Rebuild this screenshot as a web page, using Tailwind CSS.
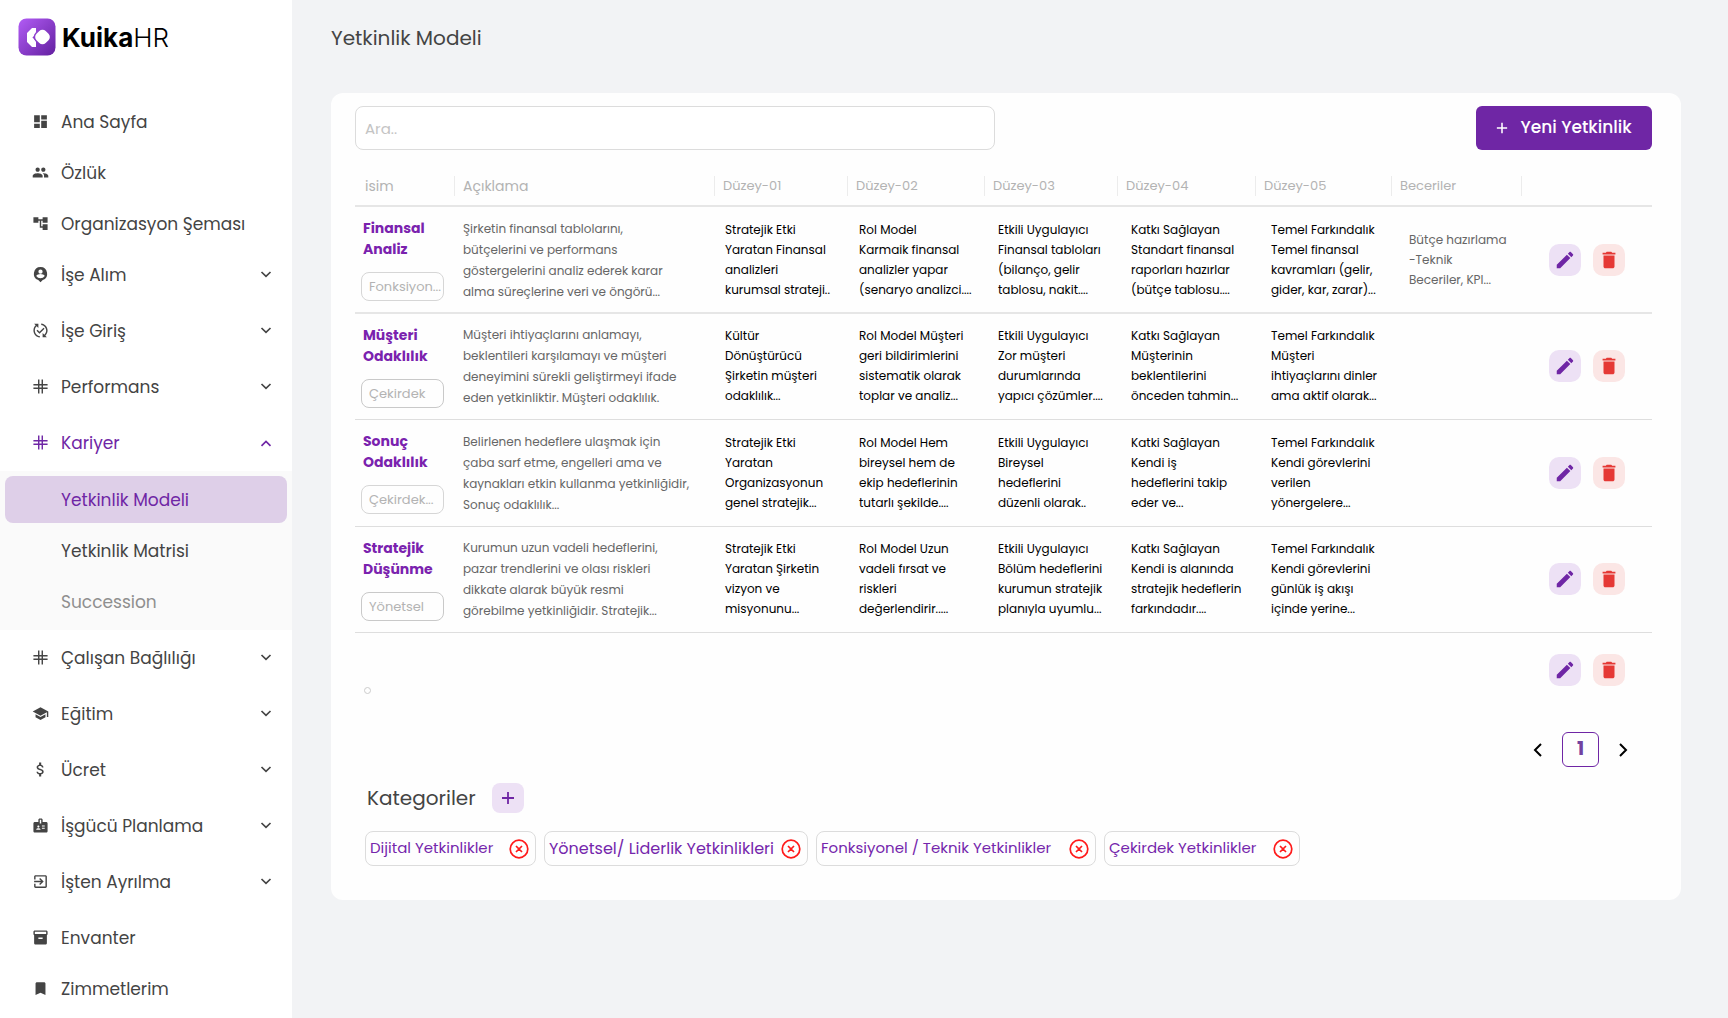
<!DOCTYPE html>
<html lang="tr">
<head>
    <meta charset="UTF-8">
    <meta name="viewport" content="width=device-width, initial-scale=1.0">
    <title>KuikaHR - Yetkinlik Modeli</title>
    <script src="https://cdn.jsdelivr.net/npm/@tailwindcss/browser@4"></script>
</head>
<body class="bg-[#f2f3f5] font-['Poppins','Inter',sans-serif] text-[#444444]">
    <!-- Icon set -->
    <svg class="hidden">
        <symbol id="i-dashboard" viewBox="0 0 24 24"><path d="M3 13h8V3H3v10zm0 8h8v-6H3v6zm10 0h8V11h-8v10zm0-18v6h8V3h-8z"/></symbol>
        <symbol id="i-group" viewBox="0 0 24 24"><path d="M16 11c1.66 0 2.99-1.34 2.99-3S17.66 5 16 5c-1.66 0-3 1.34-3 3s1.34 3 3 3zm-8 0c1.66 0 2.99-1.34 2.99-3S9.66 5 8 5C6.34 5 5 6.34 5 8s1.34 3 3 3zm0 2c-2.33 0-7 1.17-7 3.5V19h14v-2.5c0-2.33-4.67-3.5-7-3.5zm8 0c-.29 0-.62.02-.97.05 1.16.84 1.97 1.97 1.97 3.45V19h6v-2.5c0-2.33-4.67-3.5-7-3.5z"/></symbol>
        <symbol id="i-tree" viewBox="0 0 24 24"><path d="M22 11V3h-7v3H9V3H2v8h7V8h2v10h4v3h7v-8h-7v3h-2V8h2v3z"/></symbol>
        <symbol id="i-pin" viewBox="0 0 24 24"><path fill-rule="evenodd" d="M12 1.500a9.500 9.500 0 0 0-3.200 18.400L12 23l3.200-3.100A9.500 9.500 0 0 0 12 1.500zM12 5a3 3 0 1 1 0 6 3 3 0 0 1 0-6zM6 14.200c0-1.900 4-2.900 6-2.900s6 1 6 2.900a7.200 7.200 0 0 1-12 0z"/></symbol>
        <symbol id="i-changes" viewBox="0 0 24 24"><path d="M17.66 9.53l-7.07 7.07-4.24-4.24 1.41-1.41 2.83 2.83 5.66-5.66 1.41 1.41zM4 12c0-2.33 1.02-4.42 2.62-5.88L9 8.5v-6H3l2.2 2.2C3.24 6.52 2 9.11 2 12c0 5.19 3.95 9.45 9 9.95v-2.02c-3.94-.49-7-3.86-7-7.93zm18 0c0-5.19-3.95-9.45-9-9.95v2.02c3.94.49 7 3.86 7 7.93 0 2.33-1.02 4.42-2.62 5.88L15 15.5v6h6l-2.2-2.2c1.96-1.82 3.2-4.41 3.2-7.3z"/></symbol>
        <symbol id="i-hash" viewBox="0 0 24 24"><path d="M9.500 2v20M14.500 2v20M2 9.500h20M2 14.500h20" fill="none" stroke="currentColor" stroke-width="2"/></symbol>
        <symbol id="i-school" viewBox="0 0 24 24"><path d="M5 13.18v4L12 21l7-3.82v-4L12 17l-7-3.82zM12 3L1 9l11 6 9-4.91V17h2V9L12 3z"/></symbol>
        <symbol id="i-money" viewBox="0 0 24 24"><path d="M11.800 10.900c-2.270-.590-3-1.200-3-2.150 0-1.090 1.010-1.850 2.700-1.850 1.780 0 2.440.850 2.500 2.100h2.210c-.070-1.720-1.120-3.300-3.210-3.810V2h-3v3.160c-1.940.420-3.500 1.680-3.500 3.610 0 2.310 1.910 3.460 4.700 4.130 2.500.6 3 1.480 3 2.410 0 .690-.490 1.790-2.700 1.790-2.060 0-2.870-.920-2.980-2.100h-2.200c.120 2.190 1.760 3.420 3.680 3.830V22h3v-3.150c1.950-.370 3.500-1.500 3.500-3.550 0-2.840-2.430-3.810-4.700-4.400z"/></symbol>
        <symbol id="i-badge" viewBox="0 0 24 24"><path d="M20 7h-5V4c0-1.100-.9-2-2-2h-2c-1.100 0-2 .9-2 2v3H4c-1.100 0-2 .9-2 2v11c0 1.100.9 2 2 2h16c1.100 0 2-.9 2-2V9c0-1.100-.9-2-2-2zM9 12c.83 0 1.500.67 1.500 1.500S9.830 15 9 15s-1.500-.67-1.500-1.500S8.170 12 9 12zm3 6H6v-.43c0-.6.36-1.150.92-1.390.65-.28 1.350-.43 2.080-.43s1.430.15 2.080.43c.56.24.92.78.92 1.390V18zm1-9h-2V4h2v5zm5 7.500h-4V15h4v1.500zm0-3h-4V12h4v1.500z"/></symbol>
        <symbol id="i-exit" viewBox="0 0 24 24"><path d="M10.090 15.590L11.500 17l5-5-5-5-1.410 1.410L12.670 11H3v2h9.670l-2.580 2.590zM19 3H5c-1.110 0-2 .9-2 2v4h2V5h14v14H5v-4H3v4c0 1.100.89 2 2 2h14c1.100 0 2-.9 2-2V5c0-1.100-.9-2-2-2z"/></symbol>
        <symbol id="i-box" viewBox="0 0 24 24"><path d="M20 2H4c-1 0-2 .9-2 2v3.010c0 .72.43 1.340 1 1.690V20c0 1.100 1.100 2 2 2h14c.9 0 2-.9 2-2V8.700c.57-.35 1-.97 1-1.690V4c0-1.100-1-2-2-2zm-5 12H9v-2h6v2zm5-7H4V4l16-.02V7z"/></symbol>
        <symbol id="i-bookmark" viewBox="0 0 24 24"><path d="M17 3H7c-1.100 0-1.990.9-1.990 2L5 21l7-3 7 3V5c0-1.100-.9-2-2-2z"/></symbol>
        <symbol id="i-down" viewBox="0 0 12 12"><path d="M1.500 3L6 7.300 10.500 3" fill="none" stroke="currentColor" stroke-width="1.700"/></symbol>
        <symbol id="i-up" viewBox="0 0 12 12"><path d="M1.500 8.800L6 4.500l4.500 4.300" fill="none" stroke="currentColor" stroke-width="1.700"/></symbol>
        <symbol id="i-edit" viewBox="0 0 24 24"><path d="M3 17.250V21h3.750L17.810 9.940l-3.750-3.750L3 17.250zM20.710 7.040c.39-.39.39-1.020 0-1.410l-2.340-2.340c-.39-.39-1.020-.39-1.410 0l-1.830 1.830 3.750 3.750 1.830-1.830z"/></symbol>
        <symbol id="i-delete" viewBox="0 0 24 24"><path d="M6 19c0 1.100.9 2 2 2h8c1.100 0 2-.9 2-2V7H6v12zM19 4h-3.500l-1-1h-5l-1 1H5v2h14V4z"/></symbol>
        <symbol id="i-plus" viewBox="0 0 14 14"><path d="M7 1v12M1 7h12" fill="none" stroke="currentColor" stroke-width="1.800"/></symbol>
        <symbol id="i-remove" viewBox="0 0 20 20"><path d="M10 1.200a8.800 8.800 0 1 0 0 17.600 8.800 8.800 0 0 0 0-17.600zM7 7l6 6M13 7l-6 6" fill="none" stroke="currentColor" stroke-width="1.700"/></symbol>
    </svg>

    <div class="flex min-h-screen">
        <!-- Sidebar -->
        <aside class="w-[292px] shrink-0 bg-white">
            <a href="#" class="flex h-[98px] items-start gap-[6px] pt-[18px] pl-[18px] text-black">
                <svg class="size-[38px]" viewBox="0 0 38 38">
                    <defs>
                        <linearGradient id="logo" x1="0" y1="0" x2="1" y2="1"><stop offset="0" stop-color="#b25cf5"/><stop offset="1" stop-color="#6320a0"/></linearGradient>
                        <mask id="gap"><rect width="38" height="38" fill="#fff"/><rect x="18" y="12.500" width="13" height="13" rx="4.500" transform="rotate(45 24.500 19)" fill="#000" stroke="#000" stroke-width="3"/></mask>
                    </defs>
                    <rect x="0.500" y="0.500" width="37" height="37" rx="8" fill="url(#logo)"/>
                    <path d="M17.500 11.500L9.500 19.500l8 8" fill="none" stroke="#fff" stroke-width="7" stroke-linecap="round" stroke-linejoin="round" mask="url(#gap)"/>
                    <rect x="18" y="12.500" width="13" height="13" rx="4.500" transform="rotate(45 24.500 19)" fill="#fff"/>
                </svg>
                <span class="font-['Inter',sans-serif] text-[26px] leading-[40px] font-bold">Kuika<span class="font-light">HR</span></span>
            </a>
            <nav>
                <ul class="flex flex-col gap-1 pb-1 text-[17px] leading-7">
                    <li><a href="#" class="flex h-[47px] items-center gap-3 pl-8"><svg class="size-[17px] fill-current"><use href="#i-dashboard"/></svg>Ana Sayfa</a></li>
                    <li><a href="#" class="flex h-[47px] items-center gap-3 pl-8"><svg class="size-[17px] fill-current"><use href="#i-group"/></svg>Özlük</a></li>
                    <li><a href="#" class="flex h-[47px] items-center gap-3 pl-8"><svg class="size-[17px] fill-current"><use href="#i-tree"/></svg>Organizasyon Şeması</a></li>
                    <li class="pb-[5px]"><button class="flex h-[47px] w-full items-center gap-3 pr-5 pl-8"><svg class="size-[17px] fill-current"><use href="#i-pin"/></svg>İşe Alım<svg class="ml-auto size-3"><use href="#i-down"/></svg></button></li>
                    <li class="pb-[5px]"><button class="flex h-[47px] w-full items-center gap-3 pr-5 pl-8"><svg class="size-[17px] fill-current"><use href="#i-changes"/></svg>İşe Giriş<svg class="ml-auto size-3"><use href="#i-down"/></svg></button></li>
                    <li class="pb-[5px]"><button class="flex h-[47px] w-full items-center gap-3 pr-5 pl-8"><svg class="size-[17px] fill-current"><use href="#i-hash"/></svg>Performans<svg class="ml-auto size-3"><use href="#i-down"/></svg></button></li>
                    <li>
                        <button class="flex h-[47px] w-full items-center gap-3 pr-5 pl-8 text-[#6f26a5]"><svg class="size-[17px] fill-current"><use href="#i-hash"/></svg>Kariyer<svg class="ml-auto size-3"><use href="#i-up"/></svg></button>
                        <ul class="mt-[5px] flex flex-col gap-1 bg-[#fafafa] p-[5px]">
                            <li><a href="#" class="flex h-[47px] items-center rounded-lg bg-[#decfe8] pl-14 text-[#6f26a5]">Yetkinlik Modeli</a></li>
                            <li><a href="#" class="flex h-[47px] items-center pl-14">Yetkinlik Matrisi</a></li>
                            <li><a href="#" class="flex h-[47px] items-center pl-14 text-[#8f8f8f]">Succession</a></li>
                        </ul>
                    </li>
                    <li class="pb-[5px]"><button class="flex h-[47px] w-full items-center gap-3 pr-5 pl-8"><svg class="size-[17px] fill-current"><use href="#i-hash"/></svg>Çalışan Bağlılığı<svg class="ml-auto size-3"><use href="#i-down"/></svg></button></li>
                    <li class="pb-[5px]"><button class="flex h-[47px] w-full items-center gap-3 pr-5 pl-8"><svg class="size-[17px] fill-current"><use href="#i-school"/></svg>Eğitim<svg class="ml-auto size-3"><use href="#i-down"/></svg></button></li>
                    <li class="pb-[5px]"><button class="flex h-[47px] w-full items-center gap-3 pr-5 pl-8"><svg class="size-[17px] fill-current"><use href="#i-money"/></svg>Ücret<svg class="ml-auto size-3"><use href="#i-down"/></svg></button></li>
                    <li class="pb-[5px]"><button class="flex h-[47px] w-full items-center gap-3 pr-5 pl-8"><svg class="size-[17px] fill-current"><use href="#i-badge"/></svg>İşgücü Planlama<svg class="ml-auto size-3"><use href="#i-down"/></svg></button></li>
                    <li class="pb-[5px]"><button class="flex h-[47px] w-full items-center gap-3 pr-5 pl-8"><svg class="size-[17px] fill-current"><use href="#i-exit"/></svg>İşten Ayrılma<svg class="ml-auto size-3"><use href="#i-down"/></svg></button></li>
                    <li><a href="#" class="flex h-[47px] items-center gap-3 pl-8"><svg class="size-[17px] fill-current"><use href="#i-box"/></svg>Envanter</a></li>
                    <li><a href="#" class="flex h-[47px] items-center gap-3 pl-8"><svg class="size-[17px] fill-current"><use href="#i-bookmark"/></svg>Zimmetlerim</a></li>
                </ul>
            </nav>
        </aside>

        <!-- Content -->
        <main class="min-w-0 flex-1 pr-[47px] pb-10 pl-[39px]">
            <h1 class="pt-6 pb-[41px] text-[20px] leading-7">Yetkinlik Modeli</h1>

            <section class="rounded-xl bg-[#fefefe] pt-[13px] pr-[29px] pb-[34px] pl-6">
                <div class="flex items-center justify-between gap-6">
                    <input type="text" aria-label="Ara" placeholder="Ara.." class="h-11 w-[640px] min-w-0 rounded-lg border border-[#dcdcdc] bg-white px-[9px] text-[15px] placeholder:text-[#c4c4c4]">
                    <button class="flex h-11 w-[176px] shrink-0 items-center justify-center gap-3 rounded-md bg-[#6f26a5] text-[17px] font-medium text-white"><svg class="size-3"><use href="#i-plus"/></svg>Yeni Yetkinlik</button>
                </div>

                <div class="overflow-x-auto">
                    <table class="w-full min-w-[1200px] table-fixed border-collapse text-left">
                        <colgroup>
                            <col class="w-[100px]">
                            <col>
                            <col class="w-[133px]">
                            <col class="w-[137px]">
                            <col class="w-[133px]">
                            <col class="w-[138px]">
                            <col class="w-[136px]">
                            <col class="w-[130px]">
                            <col class="w-[130px]">
                        </colgroup>
                        <thead class="text-[14px] leading-5 text-[#b3b3b3]">
                            <tr class="border-b-2 border-[#e6e6e6]">
                                <th class="px-0 pt-[26px] pb-[9px] font-normal"><div class="border-r border-[#ececec] pl-[10px]">isim</div></th>
                                <th class="px-0 pt-[26px] pb-[9px] font-normal"><div class="border-r border-[#ececec] pl-2">Açıklama</div></th>
                                <th class="px-0 pt-[26px] pb-[9px] font-normal"><div class="border-r border-[#ececec] pl-2 text-[13px]">Düzey-01</div></th>
                                <th class="px-0 pt-[26px] pb-[9px] font-normal"><div class="border-r border-[#ececec] pl-2 text-[13px]">Düzey-02</div></th>
                                <th class="px-0 pt-[26px] pb-[9px] font-normal"><div class="border-r border-[#ececec] pl-2 text-[13px]">Düzey-03</div></th>
                                <th class="px-0 pt-[26px] pb-[9px] font-normal"><div class="border-r border-[#ececec] pl-2 text-[13px]">Düzey-04</div></th>
                                <th class="px-0 pt-[26px] pb-[9px] font-normal"><div class="border-r border-[#ececec] pl-2 text-[13px]">Düzey-05</div></th>
                                <th class="px-0 pt-[26px] pb-[9px] font-normal"><div class="border-r border-[#ececec] pl-2 text-[13px]">Beceriler</div></th>
                                <th></th>
                            </tr>
                        </thead>
                        <tbody class="text-[12px] leading-5 text-black">
                            <tr class="h-[107px] border-b-2 border-[#e6e6e6]">
                                <td class="pl-[6px]">
                                    <div class="mb-3 pl-[2px] text-[14px] leading-[21px] font-bold text-[#7a22ae]">Finansal<br>Analiz</div>
                                    <span class="block h-[29px] w-[83px] rounded-lg border border-[#d6d6d6] pl-[7px] text-[13px] leading-[27px] text-[#b3b3b3]">Fonksiyon...</span>
                                </td>
                                <td class="pl-2 leading-[21px] text-[#666666]">Şirketin finansal tablolarını,<br>bütçelerini ve performans<br>göstergelerini analiz ederek karar<br>alma süreçlerine veri ve öngörü...</td>
                                <td class="pl-[10px]">Stratejik Etki<br>Yaratan Finansal<br>analizleri<br>kurumsal strateji..</td>
                                <td class="pl-[11px]">Rol Model<br>Karmaik finansal<br>analizler yapar<br>(senaryo analizci....</td>
                                <td class="pl-[13px]">Etkili Uygulayıcı<br>Finansal tabloları<br>(bilanço, gelir<br>tablosu, nakit....</td>
                                <td class="pl-[13px]">Katkı Sağlayan<br>Standart finansal<br>raporları hazırlar<br>(bütçe tablosu....</td>
                                <td class="pl-[15px]">Temel Farkındalık<br>Temel finansal<br>kavramları (gelir,<br>gider, kar, zarar)...</td>
                                <td class="pl-[17px] text-[#666666]">Bütçe hazırlama<br>-Teknik<br>Beceriler, KPI...</td>
                                <td class="pl-[27px]">
                                    <div class="flex gap-3">
                                        <button aria-label="Düzenle" class="flex size-8 items-center justify-center rounded-[10px] bg-[#ede1f5] text-[#6f26a5]"><svg class="size-[22px] fill-current"><use href="#i-edit"/></svg></button>
                                        <button aria-label="Sil" class="flex size-8 items-center justify-center rounded-[10px] bg-[#fbe6e5] text-[#e53935]"><svg class="size-[22px] fill-current"><use href="#i-delete"/></svg></button>
                                    </div>
                                </td>
                            </tr>
                            <tr class="h-[106px] border-b border-[#dedede]">
                                <td class="pl-[6px]">
                                    <div class="mb-3 pl-[2px] text-[14px] leading-[21px] font-bold text-[#7a22ae]">Müşteri<br>Odaklılık</div>
                                    <span class="block h-[29px] w-[83px] rounded-lg border border-[#c9c9c9] pl-[7px] text-[13px] leading-[27px] text-[#b3b3b3]">Çekirdek</span>
                                </td>
                                <td class="pl-2 leading-[21px] text-[#666666]">Müşteri ihtiyaçlarını anlamayı,<br>beklentileri karşılamayı ve müşteri<br>deneyimini sürekli geliştirmeyi ifade<br>eden yetkinliktir. Müşteri odaklılık.</td>
                                <td class="pl-[10px]">Kültür<br>Dönüştürücü<br>Şirketin müşteri<br>odaklılık...</td>
                                <td class="pl-[11px]">Rol Model Müşteri<br>geri bildirimlerini<br>sistematik olarak<br>toplar ve analiz...</td>
                                <td class="pl-[13px]">Etkili Uygulayıcı<br>Zor müşteri<br>durumlarında<br>yapıcı çözümler....</td>
                                <td class="pl-[13px]">Katkı Sağlayan<br>Müşterinin<br>beklentilerini<br>önceden tahmin...</td>
                                <td class="pl-[15px]">Temel Farkındalık<br>Müşteri<br>ihtiyaçlarını dinler<br>ama aktif olarak...</td>
                                <td></td>
                                <td class="pl-[27px]">
                                    <div class="flex gap-3">
                                        <button aria-label="Düzenle" class="flex size-8 items-center justify-center rounded-[10px] bg-[#ede1f5] text-[#6f26a5]"><svg class="size-[22px] fill-current"><use href="#i-edit"/></svg></button>
                                        <button aria-label="Sil" class="flex size-8 items-center justify-center rounded-[10px] bg-[#fbe6e5] text-[#e53935]"><svg class="size-[22px] fill-current"><use href="#i-delete"/></svg></button>
                                    </div>
                                </td>
                            </tr>
                            <tr class="h-[107px] border-b border-[#dedede]">
                                <td class="pl-[6px]">
                                    <div class="mb-3 pl-[2px] text-[14px] leading-[21px] font-bold text-[#7a22ae]">Sonuç<br>Odaklılık</div>
                                    <span class="block h-[29px] w-[83px] rounded-lg border border-[#d6d6d6] pl-[7px] text-[13px] leading-[27px] text-[#b3b3b3]">Çekirdek...</span>
                                </td>
                                <td class="pl-2 leading-[21px] text-[#666666]">Belirlenen hedeflere ulaşmak için<br>çaba sarf etme, engelleri ama ve<br>kaynakları etkin kullanma yetkinliğidir,<br>Sonuç odaklılık...</td>
                                <td class="pl-[10px]">Stratejik Etki<br>Yaratan<br>Organizasyonun<br>genel stratejik...</td>
                                <td class="pl-[11px]">Rol Model Hem<br>bireysel hem de<br>ekip hedeflerinin<br>tutarlı şekilde....</td>
                                <td class="pl-[13px]">Etkili Uygulayıcı<br>Bireysel<br>hedeflerini<br>düzenli olarak..</td>
                                <td class="pl-[13px]">Katki Sağlayan<br>Kendi iş<br>hedeflerini takip<br>eder ve...</td>
                                <td class="pl-[15px]">Temel Farkındalık<br>Kendi görevlerini<br>verilen<br>yönergelere...</td>
                                <td></td>
                                <td class="pl-[27px]">
                                    <div class="flex gap-3">
                                        <button aria-label="Düzenle" class="flex size-8 items-center justify-center rounded-[10px] bg-[#ede1f5] text-[#6f26a5]"><svg class="size-[22px] fill-current"><use href="#i-edit"/></svg></button>
                                        <button aria-label="Sil" class="flex size-8 items-center justify-center rounded-[10px] bg-[#fbe6e5] text-[#e53935]"><svg class="size-[22px] fill-current"><use href="#i-delete"/></svg></button>
                                    </div>
                                </td>
                            </tr>
                            <tr class="h-[106px] border-b border-[#dedede]">
                                <td class="pl-[6px]">
                                    <div class="mb-3 pl-[2px] text-[14px] leading-[21px] font-bold text-[#7a22ae]">Stratejik<br>Düşünme</div>
                                    <span class="block h-[29px] w-[83px] rounded-lg border border-[#c9c9c9] pl-[7px] text-[13px] leading-[27px] text-[#b3b3b3]">Yönetsel</span>
                                </td>
                                <td class="pl-2 leading-[21px] text-[#666666]">Kurumun uzun vadeli hedeflerini,<br>pazar trendlerini ve olası riskleri<br>dikkate alarak büyük resmi<br>görebilme yetkinliğidir. Stratejik...</td>
                                <td class="pl-[10px]">Stratejik Etki<br>Yaratan Şirketin<br>vizyon ve<br>misyonunu...</td>
                                <td class="pl-[11px]">Rol Model Uzun<br>vadeli fırsat ve<br>riskleri<br>değerlendirir.....</td>
                                <td class="pl-[13px]">Etkili Uygulayıcı<br>Bölüm hedeflerini<br>kurumun stratejik<br>planıyla uyumlu...</td>
                                <td class="pl-[13px]">Katkı Sağlayan<br>Kendi is alanında<br>stratejik hedeflerin<br>farkındadır....</td>
                                <td class="pl-[15px]">Temel Farkındalık<br>Kendi görevlerini<br>günlük iş akışı<br>içinde yerine...</td>
                                <td></td>
                                <td class="pl-[27px]">
                                    <div class="flex gap-3">
                                        <button aria-label="Düzenle" class="flex size-8 items-center justify-center rounded-[10px] bg-[#ede1f5] text-[#6f26a5]"><svg class="size-[22px] fill-current"><use href="#i-edit"/></svg></button>
                                        <button aria-label="Sil" class="flex size-8 items-center justify-center rounded-[10px] bg-[#fbe6e5] text-[#e53935]"><svg class="size-[22px] fill-current"><use href="#i-delete"/></svg></button>
                                    </div>
                                </td>
                            </tr>
                            <!-- Empty record: only the collapsed category chip is drawn -->
                            <tr class="h-[76px]">
                                <td class="pb-[14px] pl-[9px] align-bottom"><span class="block size-[7px] rounded-full border border-[#cccccc]"></span></td>
                                <td colspan="7"></td>
                                <td class="pl-[27px]">
                                    <div class="flex gap-3">
                                        <button aria-label="Düzenle" class="flex size-8 items-center justify-center rounded-[10px] bg-[#ede1f5] text-[#6f26a5]"><svg class="size-[22px] fill-current"><use href="#i-edit"/></svg></button>
                                        <button aria-label="Sil" class="flex size-8 items-center justify-center rounded-[10px] bg-[#fbe6e5] text-[#e53935]"><svg class="size-[22px] fill-current"><use href="#i-delete"/></svg></button>
                                    </div>
                                </td>
                            </tr>
                        </tbody>
                    </table>
                </div>

                <!-- Pagination -->
                <div class="mt-6 flex items-center justify-end gap-4 pr-[21px] text-black">
                    <button aria-label="Önceki" class="flex size-4 items-center justify-center"><svg class="size-4" viewBox="0 0 16 16"><path d="M11 2L5 8l6 6" fill="none" stroke="currentColor" stroke-width="2"/></svg></button>
                    <button class="h-[35px] w-[37px] rounded-md border border-[#6f26a5] text-[19px] font-bold text-[#7242a0]">1</button>
                    <button aria-label="Sonraki" class="flex size-4 items-center justify-center"><svg class="size-4" viewBox="0 0 16 16"><path d="M5 2l6 6-6 6" fill="none" stroke="currentColor" stroke-width="2"/></svg></button>
                </div>

                <!-- Categories -->
                <div class="mt-4 flex items-center gap-4 pl-3">
                    <h2 class="text-[20px] leading-[30px]">Kategoriler</h2>
                    <button aria-label="Kategori ekle" class="flex h-[30px] w-8 items-center justify-center rounded-lg bg-[#ede1f5] text-[#6f26a5]"><svg class="size-[14px]"><use href="#i-plus"/></svg></button>
                </div>
                <ul class="mt-[18px] flex flex-wrap gap-2 pl-[10px] text-[15px] text-[#7526ac]">
                    <li class="flex h-[35px] min-w-[171px] items-center justify-between gap-2 rounded-lg border border-[#dcdcdc] pr-[6px] pl-1">Dijital Yetkinlikler<button aria-label="Kaldır" class="text-[#ff1a1a]"><svg class="size-5"><use href="#i-remove"/></svg></button></li>
                    <li class="flex h-[35px] min-w-[264px] items-center justify-between gap-1 rounded-lg border border-[#dcdcdc] pr-[6px] pl-1 text-[16px]">Yönetsel/ Liderlik Yetkinlikleri<button aria-label="Kaldır" class="text-[#ff1a1a]"><svg class="size-5"><use href="#i-remove"/></svg></button></li>
                    <li class="flex h-[35px] min-w-[280px] items-center justify-between gap-2 rounded-lg border border-[#dcdcdc] pr-[6px] pl-1">Fonksiyonel / Teknik Yetkinlikler<button aria-label="Kaldır" class="text-[#ff1a1a]"><svg class="size-5"><use href="#i-remove"/></svg></button></li>
                    <li class="flex h-[35px] min-w-[196px] items-center justify-between gap-2 rounded-lg border border-[#dcdcdc] pr-[6px] pl-1">Çekirdek Yetkinlikler<button aria-label="Kaldır" class="text-[#ff1a1a]"><svg class="size-5"><use href="#i-remove"/></svg></button></li>
                </ul>
            </section>
        </main>
    </div>
</body>
</html>
